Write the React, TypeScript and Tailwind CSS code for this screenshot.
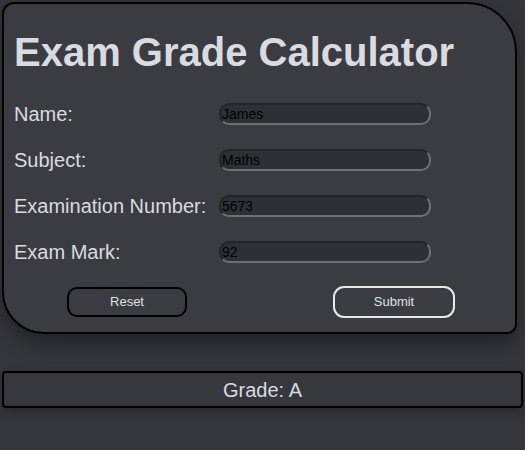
import React from "react";

const rows = [
  { label: "Name:", value: "James" },
  { label: "Subject:", value: "Maths" },
  { label: "Examination Number:", value: "5673" },
  { label: "Exam Mark:", value: "92" },
];

export default function App() {
  return (
    <div
      className="w-[525px] h-[450px] bg-[#35363b] overflow-hidden"
      style={{ fontFamily: '"Liberation Sans", Arial, sans-serif' }}
    >
      <div className="pt-[2px] px-[2px]">
        <div className="w-[515px] h-[332px] bg-[#3b3c42] border-2 border-black rounded-tl-[12px] rounded-tr-[50px] rounded-bl-[42px] rounded-br-[10px] shadow-[0_8px_20px_rgba(0,0,0,0.4)] pl-[10px] pt-[24px]">
          <h1 className="text-[40px] leading-[48px] font-bold text-[#d9dbe1] m-0">
            Exam Grade Calculator
          </h1>
          <div className="mt-[28px] flex flex-col gap-[26px]">
            {rows.map((r) => (
              <div key={r.label} className="flex items-center h-[20px]">
                <div className="w-[205px] text-[20px] text-[#d9dbe1] leading-[20px]">
                  {r.label}
                </div>
                <div className="w-[212px] h-[22px] rounded-[10px] bg-[#2f3035] border-2 border-t-[#242529] border-l-[#242529] border-b-[#6f7075] border-r-[#6f7075] text-[14px] text-black leading-[18px] pl-[1px]">
                  {r.value}
                </div>
              </div>
            ))}
          </div>
          <div className="flex mt-[25px]">
            <div className="ml-[53px] w-[120px] h-[30px] rounded-[10px] border-2 border-black flex items-center justify-center text-[13px] text-[#dfe1e6]">
              Reset
            </div>
            <div className="ml-[146px] w-[122px] h-[32px] -mt-[1px] rounded-[11px] border-2 border-[#e8e8e8] flex items-center justify-center text-[13px] text-[#dfe1e6]">
              Submit
            </div>
          </div>
        </div>
        <div className="mt-[37px] w-[521px] h-[37px] bg-[#37383d] border-2 border-black rounded-[4px] flex items-center justify-center text-[20px] text-[#d9dbe1] shadow-[0_4px_8px_rgba(0,0,0,0.25)]">
          Grade: A
        </div>
      </div>
    </div>
  );
}
